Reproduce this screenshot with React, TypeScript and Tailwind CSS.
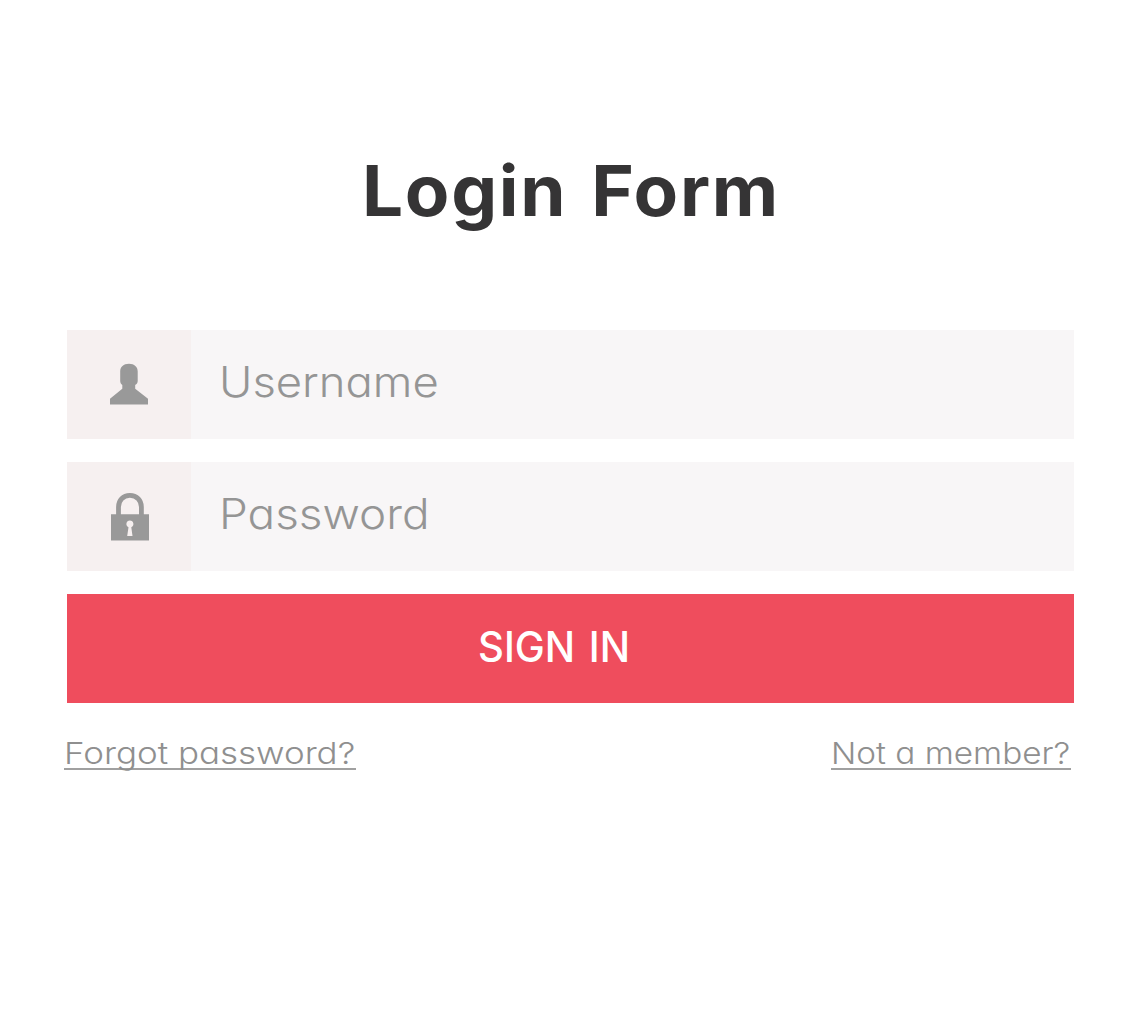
import React from "react";

const features = "[font-feature-settings:'cv11','ss03']";

function UserIcon() {
  return (
    <svg width="38" height="42" viewBox="0 0 38 42" fill="#999999" aria-hidden="true" className="-mt-px -ml-px">
      <path d="M19 0.8C13.5 0.8 10.2 4 10.2 8.5V18C10.2 20 11.2 21 12.3 22V25.8L0 35.8V41.5H38V35.8L25.2 25.8V22C26.7 21 27.7 20 27.7 18V8.5C27.7 4 24.3 0.8 19 0.8Z" />
    </svg>
  );
}

function LockIcon() {
  return (
    <svg width="38" height="48" viewBox="0 0 38 48" aria-hidden="true" className="ml-px">
      <path d="M7.5 23V14C7.5 7.5 12 2.4 18.9 2.4S30.4 7.5 30.4 14V23" fill="none" stroke="#999999" strokeWidth="4.8" />
      <path
        fill="#999999"
        fillRule="evenodd"
        d="M0 21.3H38V47.6H0ZM18.9 27.5A3.5 3.5 0 0 0 17.5 34.2L16.2 43H21.5L20.3 34.2A3.5 3.5 0 0 0 18.9 27.5Z"
      />
    </svg>
  );
}

function Field({ icon, children }: { icon: React.ReactNode; children: React.ReactNode }) {
  return (
    <label className="flex h-[109px] bg-[#f8f6f7]">
      <span className="flex w-[124px] items-center justify-center bg-[#f6f0f0]">{icon}</span>
      <span className="pt-[26px] pl-[28px] text-[42px] leading-[52px] font-[350] text-[#959595]">{children}</span>
    </label>
  );
}

export default function App() {
  return (
    <main className={`h-[1017px] w-[1140px] overflow-hidden bg-white font-['Inter',sans-serif] ${features}`}>
      <h1 className="pt-[149px] pl-[362px] text-[70px] leading-[84px] font-bold tracking-[1.6px] whitespace-pre text-[#353435]">
        <span className="inline-block origin-left scale-x-[1.04] [word-spacing:5px]">Login Form</span>
      </h1>
      <form className="mt-[97px] ml-[67px] flex w-[1007px] flex-col gap-[23px]">
        <Field icon={<UserIcon />}>
          <span className="inline-block origin-left scale-x-[1.08]">Username</span>
        </Field>
        <Field icon={<LockIcon />}>
          <span className="inline-block origin-left scale-x-[1.092]">Password</span>
        </Field>
        <button type="button" className="flex h-[109px] bg-[#ef4d5d] pt-[27px] pl-[411px] text-[42px] leading-[52px] font-medium whitespace-pre text-white">
          <span className="inline-block origin-left scale-x-[0.955] [word-spacing:3px]">SIGN IN</span>
        </button>
      </form>
      <nav className="mt-[31px] flex justify-between pr-[69px] pl-[64px] text-[30px] leading-[38px] font-light text-[#8f8f8f]">
        <a className="h-[36px] w-[292px] border-b-2 border-[#a0a0a0] whitespace-nowrap">
          <span className="inline-block origin-left scale-x-[1.165]">Forgot password?</span>
        </a>
        <a className="h-[36px] w-[240px] border-b-2 border-[#a0a0a0] whitespace-nowrap">
          <span className="inline-block origin-left scale-x-[1.11]">Not a member?</span>
        </a>
      </nav>
    </main>
  );
}
